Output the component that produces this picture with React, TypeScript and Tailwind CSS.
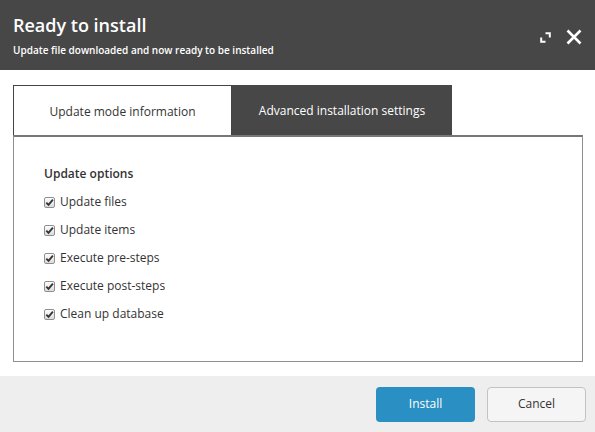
import React from "react";

const options = [
  "Update files",
  "Update items",
  "Execute pre-steps",
  "Execute post-steps",
  "Clean up database",
];

const CheckBox = () => (
  <span className="flex h-[11px] w-[11px] items-center justify-center rounded-[2px] border border-[#8f8f8f] bg-gradient-to-b from-[#fdfdfd] to-[#dcdcdc]">
    <svg width="9" height="9" viewBox="0 0 9 9">
      <path d="M1.3 4.6 L3.5 6.9 L7.9 1.6" fill="none" stroke="#333" strokeWidth="1.8" />
    </svg>
  </span>
);

export default function App() {
  return (
    <div
      className="flex h-[432px] w-[595px] flex-col bg-white text-[#333]"
      style={{ fontFamily: '"Open Sans", "Noto Sans", sans-serif' }}
    >
      {/* header */}
      <div className="flex h-[70px] items-center justify-between bg-[#474747] pl-[13px] pr-[13px] text-white">
        <div className="flex flex-col">
          <h1 className="text-[18px] font-semibold leading-[24px]">Ready to install</h1>
          <p className="mt-[6px] text-[10px] font-semibold leading-[14px]">
            Update file downloaded and now ready to be installed
          </p>
        </div>
        <div className="flex items-center gap-[15px] pt-[4px]">
          <svg width="11" height="11" viewBox="0 0 11 11">
            <path d="M5.5 1.2 H9.8 V5.5" fill="none" stroke="#fff" strokeWidth="2" />
            <path d="M1.2 5.5 V9.8 H5.5" fill="none" stroke="#fff" strokeWidth="2" />
          </svg>
          <svg width="16" height="16" viewBox="0 0 16 16">
            <path d="M1.5 1.5 L14.5 14.5 M14.5 1.5 L1.5 14.5" stroke="#fff" strokeWidth="2.6" />
          </svg>
        </div>
      </div>

      {/* body */}
      <div className="flex flex-1 flex-col px-[13px] pt-[15px]">
        <div className="flex h-[50px]">
          <div className="flex w-[219px] items-center justify-center border border-b-0 border-[#444] bg-white pt-[2px] text-[12px]">
            Update mode information
          </div>
          <div className="flex w-[220px] items-center justify-center bg-[#474747] pt-[2px] text-[12px] text-white">
            Advanced installation settings
          </div>
        </div>
        <div className="h-[227px] w-[570px] border border-t-2 border-[#8f8f8f] border-t-[#777] px-[30px] pt-[28px]">
          <h2 className="text-[12px] font-semibold leading-[17px]">Update options</h2>
          <ul className="mt-[6px] flex flex-col">
            {options.map((o) => (
              <li key={o} className="flex h-[28px] items-center gap-[5px] text-[12px]">
                <CheckBox />
                <span>{o}</span>
              </li>
            ))}
          </ul>
        </div>
      </div>

      {/* footer */}
      <div className="flex h-[56px] items-center justify-end gap-[12px] bg-[#eeeeee] pr-[9px]">
        <button className="h-[35px] w-[99px] rounded-[4px] bg-[#2a8fc2] text-[12px] text-white">
          Install
        </button>
        <button className="h-[35px] w-[99px] rounded-[4px] border border-[#c2c2c2] bg-[#f5f5f5] text-[12px] text-[#333]">
          Cancel
        </button>
      </div>
    </div>
  );
}
